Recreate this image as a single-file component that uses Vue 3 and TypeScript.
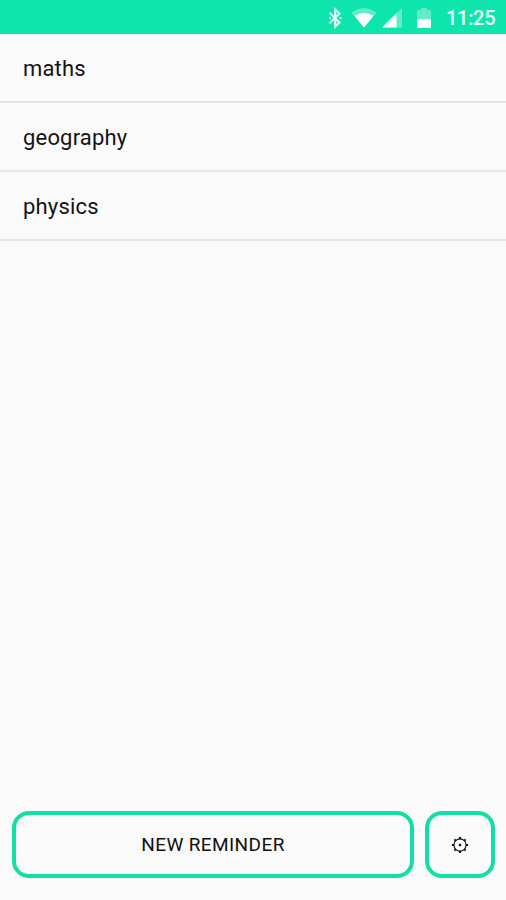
<script setup lang="ts">
import { ref } from 'vue'

const reminders = ref<string[]>(['maths', 'geography', 'physics'])
const time = '11:25'
</script>

<template>
  <div class="screen">
    <header class="status">
      <svg class="bluetooth" viewBox="0 0 14 22" aria-hidden="true">
        <path d="M1.5 5.8 L11.5 15.6 L7.2 19.6 V2.4 L11.5 6.4 L1.5 16.2 M1 11H3 M11.6 11H13.6" />
      </svg>
      <svg class="wifi" viewBox="0 0 26 20" aria-hidden="true">
        <path class="dim" d="M0.5 4.5 Q13 -4 25.5 4.5 L13 19.5 Z" />
        <path d="M3.4 7.7 Q13 2.2 22.6 7.7 L13 19.5 Z" />
      </svg>
      <svg class="signal" viewBox="0 0 20 20" aria-hidden="true">
        <path class="dim" d="M0 19.5 L20 0 V19.5 Z" />
        <path d="M0 19.5 L14.5 5.3 V19.5 Z" />
      </svg>
      <svg class="battery" viewBox="0 0 14 20" aria-hidden="true">
        <path class="dim" d="M0 3 Q0 2 1 2 H4 V0 H10 V2 H13 Q14 2 14 3 V11.3 H0 Z" />
        <path d="M0 11.3 H14 V19 Q14 20 13 20 H1 Q0 20 0 19 Z" />
      </svg>
      <span class="time">{{ time }}</span>
    </header>
    <ul class="list">
      <li v-for="item in reminders" :key="item" class="row">{{ item }}</li>
    </ul>
    <footer class="actions">
      <button class="btn new">NEW REMINDER</button>
      <button class="btn settings">
        <svg class="gear" viewBox="0 0 18 18" aria-hidden="true">
          <circle class="ring" cx="9" cy="9" r="6.1" />
          <path class="teeth" d="M9 .9V3.2M9 14.8V17.1M.9 9H3.2M14.8 9H17.1M3.4 3.4L4.9 4.9M13.1 13.1L14.6 14.6M3.4 14.6L4.9 13.1M13.1 4.9L14.6 3.4" />
          <circle cx="9" cy="9" r="1.3" />
        </svg>
      </button>
    </footer>
  </div>
</template>

<style>
body {
  margin: 0;
  background: #fafafa;
}
</style>

<style scoped>
.screen {
  display: flex;
  flex-direction: column;
  box-sizing: border-box;
  height: 900px;
  background: #fafafa;
  color: #141414;
  font-family: Roboto, sans-serif;
}
.status {
  display: flex;
  align-items: center;
  box-sizing: border-box;
  height: 34px;
  padding: 2px 10px 0 0;
  justify-content: flex-end;
  background: #0de5ad;
  color: #e9fff8;
}
.status svg {
  fill: #fafffd;
  flex: none;
}
.status .dim {
  fill: #62edc9;
}
.status .bluetooth {
  width: 14px;
  height: 22px;
  margin-right: 9px;
  fill: none;
  stroke: #e4fff6;
  stroke-width: 2.1;
}
.wifi {
  width: 26px;
  height: 20px;
  margin-right: 5px;
}
.signal {
  width: 20px;
  height: 20px;
  margin-right: 15px;
}
.battery {
  width: 14px;
  height: 20px;
}
.time {
  width: 50px;
  margin-left: 15px;
  font-size: 20px;
  font-weight: 500;
  letter-spacing: -0.3px;
  line-height: 24px;
  white-space: nowrap;
}
.list {
  flex: 1;
  margin: 0;
  padding: 0;
  list-style: none;
}
.row {
  box-sizing: border-box;
  height: 69px;
  padding-left: 23px;
  border-bottom: 2px solid #e6e6e6;
  font-size: 22px;
  letter-spacing: 0.18px;
  line-height: 69px;
}
.actions {
  display: flex;
  gap: 11px;
  padding: 0 11px 22px 12px;
}
.btn {
  display: flex;
  align-items: center;
  justify-content: center;
  box-sizing: border-box;
  height: 67px;
  padding: 0;
  border: 4px solid #13dfa5;
  border-radius: 17px;
  background: transparent;
  color: #101010;
  font-family: inherit;
  font-size: 19px;
  letter-spacing: 0.4px;
}
.new {
  flex: 1;
}
.settings {
  width: 70px;
}
.gear {
  width: 18px;
  height: 18px;
  fill: #151515;
}
.ring,
.teeth {
  fill: none;
  stroke: #151515;
  stroke-width: 1.1;
}
.teeth {
  stroke-width: 2;
}
</style>
